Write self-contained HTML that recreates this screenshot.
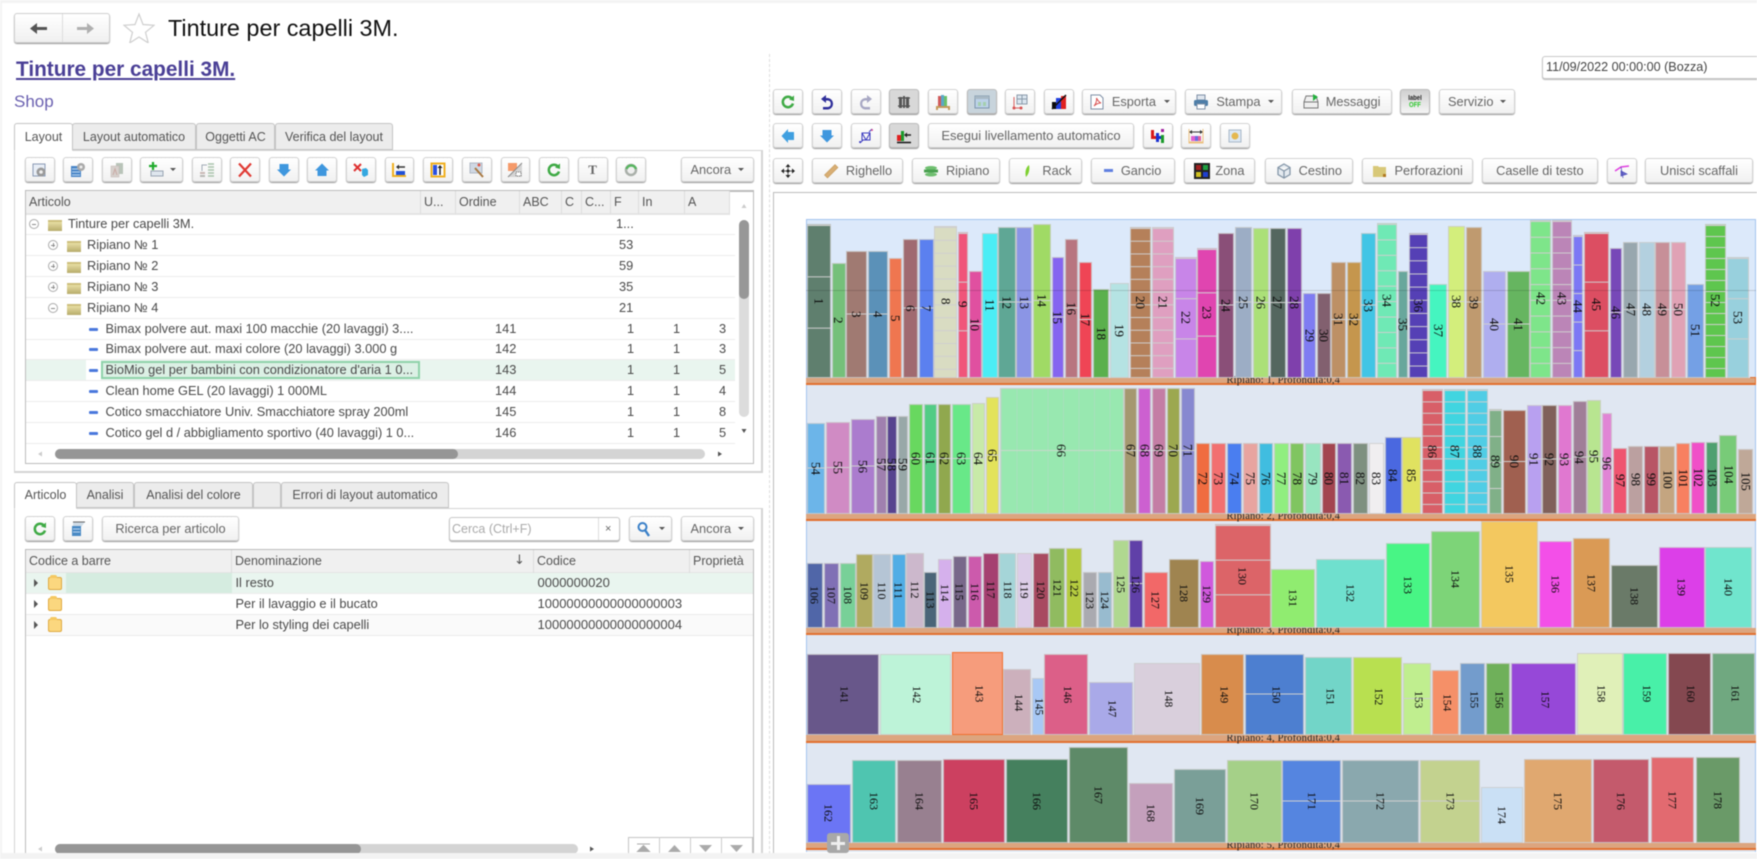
<!DOCTYPE html>
<html lang="it"><head><meta charset="utf-8"><title>Tinture per capelli 3M.</title>
<style>
html,body{margin:0;padding:0;background:#fff}
#p{position:relative;width:1757px;height:859px;overflow:hidden;background:#fff;font-family:"Liberation Sans",sans-serif;font-size:12.5px;color:#555;filter:blur(.5px)}
#p div,#p span,#p a{position:absolute;white-space:nowrap}
.btn{box-sizing:border-box;border:1px solid #d2d2d2;border-radius:3px;background:linear-gradient(#fff,#f1f1f1);box-shadow:0 1px 1px #999;display:flex;align-items:center;justify-content:center;gap:7px;color:#666;font-size:12.8px}
.btn svg{width:16px;height:16px;flex:none}
.btn.pr{background:#d8d8d8;border-color:#bbb}
.a{top:157px;height:25px}.b{top:516px;height:25px}.c{top:89px;height:25px}.d{top:123px;height:25px}.e{top:158px;height:25px}
.car{display:inline-block;width:0;height:0;border:3px solid transparent;border-top:3px solid #555;border-bottom:0;margin-left:1px}
.tab{box-sizing:border-box;background:#ececec;border:1px solid #c4c4c4;border-bottom:1px solid #c4c4c4;border-radius:3px 3px 0 0;text-align:center;color:#555;font-size:12.5px}
.tab.on{background:#fff;border-bottom-color:#fff;z-index:2}
.pan{box-sizing:border-box;border:1px solid #d4d4d4;border-width:1px 2px 2px 1px}
.grid{box-sizing:border-box;border:1px solid #bcbcbc;border-top-width:2px;background:#fff}
.hd{background:#f0f0f0;height:22px;border-bottom:2px solid #e4e4e4}
.hc{height:23px;line-height:22px;color:#555;border-right:1px solid #ddd;box-sizing:border-box;padding-left:3px;overflow:hidden;font-size:12.5px}
.ln{left:26px;height:1px;background:#ececec}
.t{line-height:20px;height:20px;color:#4a4a4a;font-size:12.8px}
.rt{text-align:right}
.dash{width:9px;height:3px;background:#4a78dc;border-radius:1px}
.tg{width:8px;height:8px;border:1px solid #aaa;border-radius:50%;box-sizing:content-box}
.tg::before{content:"";position:absolute;left:2px;right:2px;top:3.5px;height:1px;background:#888}
.tg.pl::after{content:"";position:absolute;top:2px;bottom:2px;left:3.5px;width:1px;background:#888}
.fd{width:14px;height:11px;background:linear-gradient(#e8dfa4,#b7ab6b);border-top:2px solid #cdbf7c;box-sizing:border-box}
.fd2{width:14px;height:13px;box-sizing:border-box;background:#fbd77f;border:1px solid #dfa93f;border-radius:2px}
.fd2::before{content:"";position:absolute;left:1px;top:-3px;width:7px;height:3px;background:#f5c860;border-radius:2px 2px 0 0}
.arr{width:0;height:0;border:4px solid transparent;border-left:4px solid #555;border-right:0}
.w{position:absolute;width:0;height:0;font-family:"Liberation Serif",serif;color:#0c0c0c}
.w b{position:absolute;box-sizing:border-box;left:calc(var(--x)*1px/3);top:calc(var(--t)*1px/3);width:calc((var(--r) - var(--x))*1px/3);height:calc((var(--b) - var(--t))*1px/3);background-color:var(--c);border:1px solid rgba(205,205,205,.85);display:flex;align-items:center;justify-content:center;writing-mode:vertical-rl;font-weight:400;line-height:1;overflow:visible}
.w b.m{background-image:linear-gradient(transparent calc(50% - 1px),#cfcfcf calc(50% - 1px),#cfcfcf 50%,transparent 50%)}
.w b.g{background-image:linear-gradient(#cfcfcf 1px,transparent 1px);background-size:100% calc(var(--d)*1px/3)}
.sh{left:806px;width:950px;height:7.5px;box-sizing:border-box;background:#dca57f;border-bottom:2.5px solid #e2702f}
.lb{left:1226.5px;font:10.5px/12px "Liberation Serif",serif;color:#222;letter-spacing:.15px}
</style></head><body><div id="p">
<svg width="0" height="0" style="position:absolute"><defs>
<symbol id="ref" viewBox="0 0 16 16"><path d="M12.3 5A5.2 5.2 0 1 0 13 9.500" fill="none" stroke="#3faa45" stroke-width="2.500"/><path d="M9 5.500l5-4v5.500z" fill="#3faa45"/></symbol>
<symbol id="dn" viewBox="0 0 16 16"><path d="M3.500 2h9v5.500H15l-7 7-7-7h2.500z" fill="#3f97de"/></symbol>
<symbol id="up" viewBox="0 0 16 16"><path d="M8 1.500l7 7h-2.500v5.500h-9V8.500H1z" fill="#3f97de"/></symbol>
</defs></svg>

<!-- frame strips -->
<div style="left:0;top:0;width:1757px;height:3px;background:#f3f3f3"></div>
<div style="left:0;top:0;width:2px;height:859px;background:#f3f3f3"></div>

<!-- head -->
<div style="left:14px;top:13px;width:96px;height:30px;box-sizing:border-box;border:1px solid #cfcfcf;border-radius:3px;background:linear-gradient(#fff,#f0f0f0);box-shadow:0 1px 1px #999"></div>
<div style="left:62px;top:14px;width:1px;height:28px;background:#ddd"></div>
<svg style="position:absolute;left:29px;top:22px" width="19" height="13" viewBox="0 0 19 13"><path d="M18 5v3H8v4L1 6.500 8 1v4z" fill="#555"/></svg>
<svg style="position:absolute;left:76px;top:22px" width="19" height="13" viewBox="0 0 19 13"><path d="M1 5v3h10v4l7-5.500L11 1v4z" fill="#b0b0b0"/></svg>
<svg style="position:absolute;left:123px;top:12px" width="32" height="31" viewBox="0 0 32 31"><path d="M16 2l4 10.500 11 .8-8.500 7 2.800 10.700L16 25l-9.300 6 2.800-10.700L1 13.300l11-.8z" fill="#fff" stroke="#cfcfcf" stroke-width="1.200"/></svg>
<div style="left:168px;top:14px;font-size:23.4px;line-height:28px;color:#111">Tinture per capelli 3M.</div>
<div style="left:16px;top:57px;font-size:20.800px;font-weight:700;line-height:25px;color:#4a3f96;text-decoration:underline">Tinture per capelli 3M.</div>
<div style="left:14px;top:92px;font-size:17px;line-height:20px;color:#6a60b0">Shop</div>
<div style="left:769px;top:54px;width:0;height:800px;border-left:1px dashed #dcdcdc"></div>

<!-- upper tabs -->
<div class="pan" style="left:14px;top:150px;width:749px;height:323px"></div>
<div class="tab on" style="left:14px;top:123px;width:59px;height:28px;line-height:26px">Layout</div>
<div class="tab" style="left:72px;top:123px;width:124px;height:27px;line-height:26px">Layout automatico</div>
<div class="tab" style="left:196px;top:123px;width:79px;height:27px;line-height:26px">Oggetti AC</div>
<div class="tab" style="left:275px;top:123px;width:118px;height:27px;line-height:26px">Verifica del layout</div>

<!-- upper toolbar -->
<div class="btn a" style="left:25px;width:30px"><svg viewBox="0 0 16 16"><rect x="1" y="2" width="12" height="12" fill="#e8eef6" stroke="#8a9ab5"/><circle cx="9" cy="10" r="4.500" fill="#9a9a9a"/><circle cx="9" cy="10" r="1.800" fill="#eee"/></svg></div>
<div class="btn a" style="left:63px;width:30px"><svg viewBox="0 0 16 16"><rect x="1" y="4" width="10" height="11" fill="#4a86c8"/><path d="M2 7h8M2 10h8M2 13h8" stroke="#bcd6f0"/><circle cx="11" cy="5" r="4" fill="#aaa"/><circle cx="11" cy="5" r="1.500" fill="#eee"/></svg></div>
<div class="btn a" style="left:102px;width:30px"><svg viewBox="0 0 16 16"><rect x="7" y="1" width="7" height="11" fill="#b9c4b9"/><rect x="2" y="4" width="8" height="11" fill="#d6d0cc" stroke="#c4b8b4" stroke-width=".5"/><path d="M4 13l2-6 2 6" fill="none" stroke="#c9a9a4"/></svg></div>
<div class="btn a" style="left:140px;width:43px;gap:5px"><svg viewBox="0 0 16 16"><path d="M5 0v8M1 4h8" stroke="#1faa2c" stroke-width="2.200"/><rect x="3" y="9" width="12" height="5" fill="#dfe6ee" stroke="#99a5b3"/></svg><i class="car"></i></div>
<div class="btn a" style="left:191.500px;width:30px"><svg viewBox="0 0 16 16"><path d="M9 2h6M9 5h6M9 8h6M9 11h6M9 14h6" stroke="#a9c4ac" stroke-width="1.500"/><path d="M3 9V3h5" fill="none" stroke="#a0aab5"/><rect x="1" y="10" width="5" height="2" fill="#c8b8b4"/><rect x="1" y="13" width="5" height="2" fill="#b8b8b4"/></svg></div>
<div class="btn a" style="left:230px;width:30px"><svg viewBox="0 0 16 16"><path d="M2 1.500l12 13M14 1.500l-12 13" stroke="#e03a34" stroke-width="2.200"/></svg></div>
<div class="btn a" style="left:269px;width:29.500px"><svg viewBox="0 0 16 16"><use href="#dn"/></svg></div>
<div class="btn a" style="left:307px;width:30px"><svg viewBox="0 0 16 16"><use href="#up"/></svg></div>
<div class="btn a" style="left:346px;width:30px"><svg viewBox="0 0 16 16"><path d="M1 2l7 7M8 2L1 9" stroke="#de3030" stroke-width="2"/><path d="M9 7l4-1 2 2v5l-4 2-2-2z" fill="#35a8e0"/></svg></div>
<div class="btn a" style="left:384.600px;width:29.500px"><svg viewBox="0 0 16 16"><path d="M2 1v13h13" fill="none" stroke="#f0b020" stroke-width="2"/><rect x="5" y="9" width="9" height="4" fill="#2050d8"/><path d="M6 5h8" stroke="#333" stroke-width="1.500"/><path d="M5 5l3-2.500v5z" fill="#333"/></svg></div>
<div class="btn a" style="left:423px;width:30px"><svg viewBox="0 0 16 16"><rect x="1.500" y="1.500" width="13" height="13" fill="#fff" stroke="#f0b020" stroke-width="2"/><rect x="3" y="3" width="4" height="10" fill="#2a50e0"/><path d="M10 13V5" stroke="#222" stroke-width="1.500"/><path d="M10 3l2.500 3h-5z" fill="#222"/></svg></div>
<div class="btn a" style="left:462px;width:29.500px"><svg viewBox="0 0 16 16"><rect x="1" y="1" width="12" height="10" fill="#cfd8e4" stroke="#b0b8c4"/><path d="M6 6l8 9" stroke="#a87840" stroke-width="2"/><circle cx="10" cy="3" r="1.500" fill="#e05a4a"/></svg></div>
<div class="btn a" style="left:500.500px;width:29.500px"><svg viewBox="0 0 16 16"><path d="M1 1h9v8H1z" fill="#f59a6a"/><path d="M1 15L15 1v14z" fill="#d4d4d4"/><path d="M1 15L15 1" stroke="#888"/><rect x="9" y="10" width="5" height="4" fill="#fff" stroke="#666" stroke-dasharray="1 1"/></svg></div>
<div class="btn a" style="left:539px;width:30px"><svg viewBox="0 0 16 16"><use href="#ref"/></svg></div>
<div class="btn a" style="left:577.600px;width:30px;font:700 13px 'Liberation Serif',serif;color:#666">T</div>
<div class="btn a" style="left:616px;width:30px"><svg viewBox="0 0 16 16"><circle cx="8" cy="8" r="5" fill="#eee" stroke="#aab0aa" stroke-width="2.500"/><path d="M3.500 7A5 5 0 0 1 13 7" fill="none" stroke="#57b55f" stroke-width="2.500"/></svg></div>
<div class="btn a" style="left:680.600px;width:73.400px;gap:6px">Ancora <i class="car"></i></div>

<!-- upper grid -->
<div class="grid" style="left:25px;top:190px;width:729px;height:274px"></div>
<div class="hd" style="left:26px;top:191px;width:704px"></div>
<div class="hc" style="left:26px;top:191px;width:395px">Articolo</div>
<div class="hc" style="left:421px;top:191px;width:35px">U...</div>
<div class="hc" style="left:456px;top:191px;width:64px">Ordine</div>
<div class="hc" style="left:520px;top:191px;width:42px">ABC</div>
<div class="hc" style="left:562px;top:191px;width:20px">C</div>
<div class="hc" style="left:582px;top:191px;width:29px">C...</div>
<div class="hc" style="left:611px;top:191px;width:28px">F</div>
<div class="hc" style="left:639px;top:191px;width:46px">In</div>
<div class="hc" style="left:685px;top:191px;width:45px">A</div>

<div style="left:26px;top:360px;width:709px;height:20px;background:#e9f5ef"></div>
<div style="left:86px;top:360px;width:15px;height:20px;background:#fff"></div>
<div style="left:101px;top:361px;width:319px;height:18px;box-sizing:border-box;border:2px solid #8fd2aa;background:#dcf0e5"></div>
<div class="ln" style="top:234px;width:709px"></div><div class="ln" style="top:255px;width:709px"></div><div class="ln" style="top:276px;width:709px"></div><div class="ln" style="top:297px;width:709px"></div><div class="ln" style="top:318px;width:709px"></div><div class="ln" style="top:339px;width:709px"></div><div class="ln" style="top:359px;width:709px"></div><div class="ln" style="top:380px;width:709px"></div><div class="ln" style="top:401px;width:709px"></div><div class="ln" style="top:422px;width:709px"></div><div class="ln" style="top:443px;width:709px"></div>

<span class="tg" style="left:29px;top:219px"></span><div class="fd" style="left:48px;top:220px"></div><div class="t" style="left:68px;top:214px">Tinture per capelli 3M.</div><div class="t" style="left:616px;top:214px">1...</div>
<span class="tg pl" style="left:48px;top:240px"></span><div class="fd" style="left:67px;top:241px"></div><div class="t" style="left:87px;top:235px">Ripiano № 1</div><div class="t" style="left:619px;top:235px">53</div>
<span class="tg pl" style="left:48px;top:261px"></span><div class="fd" style="left:67px;top:262px"></div><div class="t" style="left:87px;top:256px">Ripiano № 2</div><div class="t" style="left:619px;top:256px">59</div>
<span class="tg pl" style="left:48px;top:282px"></span><div class="fd" style="left:67px;top:283px"></div><div class="t" style="left:87px;top:277px">Ripiano № 3</div><div class="t" style="left:619px;top:277px">35</div>
<span class="tg" style="left:48px;top:303px"></span><div class="fd" style="left:67px;top:304px"></div><div class="t" style="left:87px;top:298px">Ripiano № 4</div><div class="t" style="left:619px;top:298px">21</div>

<div class="dash" style="left:89px;top:328px"></div><div class="t" style="left:105.500px;top:319px">Bimax polvere aut. maxi 100 macchie (20 lavaggi) 3....</div><div class="t" style="left:495px;top:319px">141</div><div class="t" style="left:627px;top:319px">1</div><div class="t" style="left:673px;top:319px">1</div><div class="t" style="left:719px;top:319px">3</div>
<div class="dash" style="left:89px;top:348px"></div><div class="t" style="left:105.500px;top:339px">Bimax polvere aut. maxi colore (20 lavaggi) 3.000 g</div><div class="t" style="left:495px;top:339px">142</div><div class="t" style="left:627px;top:339px">1</div><div class="t" style="left:673px;top:339px">1</div><div class="t" style="left:719px;top:339px">3</div>
<div class="dash" style="left:89px;top:369px"></div><div class="t" style="left:105.500px;top:360px">BioMio gel per bambini con condizionatore d'aria 1 0...</div><div class="t" style="left:495px;top:360px">143</div><div class="t" style="left:627px;top:360px">1</div><div class="t" style="left:673px;top:360px">1</div><div class="t" style="left:719px;top:360px">5</div>
<div class="dash" style="left:89px;top:390px"></div><div class="t" style="left:105.500px;top:381px">Clean home GEL (20 lavaggi) 1 000ML</div><div class="t" style="left:495px;top:381px">144</div><div class="t" style="left:627px;top:381px">1</div><div class="t" style="left:673px;top:381px">1</div><div class="t" style="left:719px;top:381px">4</div>
<div class="dash" style="left:89px;top:411px"></div><div class="t" style="left:105.500px;top:402px">Cotico smacchiatore Univ. Smacchiatore spray 200ml</div><div class="t" style="left:495px;top:402px">145</div><div class="t" style="left:627px;top:402px">1</div><div class="t" style="left:673px;top:402px">1</div><div class="t" style="left:719px;top:402px">8</div>
<div class="dash" style="left:89px;top:432px"></div><div class="t" style="left:105.500px;top:423px">Cotico gel d / abbigliamento sportivo (40 lavaggi) 1 0...</div><div class="t" style="left:495px;top:423px">146</div><div class="t" style="left:627px;top:423px">1</div><div class="t" style="left:673px;top:423px">1</div><div class="t" style="left:719px;top:423px">5</div>

<div style="left:739px;top:220px;width:10px;height:197px;background:#dcdcdc;border-radius:5px"></div>
<div style="left:739px;top:220px;width:10px;height:79px;background:#979797;border-radius:5px"></div>
<svg style="position:absolute;left:741px;top:203px" width="6" height="6"><path d="M3 1l2.500 4h-5z" fill="#ccc"/></svg>
<svg style="position:absolute;left:741px;top:428px" width="6" height="6"><path d="M3 5l2.500-4h-5z" fill="#555"/></svg>
<div style="left:55px;top:449px;width:650px;height:10px;background:#d4d4d4;border-radius:5px"></div>
<div style="left:55px;top:449px;width:403px;height:10px;background:#969696;border-radius:5px"></div>
<svg style="position:absolute;left:37px;top:451px" width="6" height="6"><path d="M1 3l4-2.500v5z" fill="#ccc"/></svg>
<svg style="position:absolute;left:717px;top:451px" width="6" height="6"><path d="M5 3L1 .5v5z" fill="#555"/></svg>

<!-- lower tabs -->
<div class="pan" style="left:14px;top:508px;width:749px;height:350px"></div>
<div class="tab on" style="left:14px;top:482px;width:63px;height:27px;line-height:25px">Articolo</div>
<div class="tab" style="left:76px;top:482px;width:58px;height:26px;line-height:25px">Analisi</div>
<div class="tab" style="left:134px;top:482px;width:119px;height:26px;line-height:25px">Analisi del colore</div>
<div class="tab" style="left:253px;top:482px;width:28px;height:26px"></div>
<div class="tab" style="left:281px;top:482px;width:168px;height:26px;line-height:25px">Errori di layout automatico</div>

<div class="btn b" style="left:25px;width:30px"><svg viewBox="0 0 16 16"><use href="#ref"/></svg></div>
<div class="btn b" style="left:63px;width:30px"><svg viewBox="0 0 16 16"><path d="M3 1h12l-4 5v9H3z" fill="#cfdbe6"/><rect x="2" y="5" width="9" height="10" fill="#4a8ac4"/><path d="M3 8h7M3 11h7" stroke="#bcd6f0"/><path d="M3 1h12" stroke="#666"/></svg></div>
<div class="btn b" style="left:102px;width:137px">Ricerca per articolo</div>
<div style="left:449px;top:517px;width:171px;height:24px;box-sizing:border-box;border:1px solid #c8c8c8;border-radius:3px;background:#fff;box-shadow:0 1px 1px #aaa"></div>
<div style="left:598px;top:518px;width:1px;height:22px;background:#ddd"></div>
<div style="left:452px;top:519px;line-height:20px;color:#aaa">Cerca (Ctrl+F)</div>
<div style="left:605px;top:519px;line-height:20px;color:#666;font-size:11px">×</div>
<div class="btn b" style="left:629px;width:43px;gap:6px"><svg viewBox="0 0 16 16"><circle cx="6.500" cy="6" r="4" fill="none" stroke="#3a80c8" stroke-width="2"/><path d="M9 9l4 6" stroke="#3a80c8" stroke-width="2.400"/></svg><i class="car"></i></div>
<div class="btn b" style="left:680.600px;width:73.400px;gap:6px">Ancora <i class="car"></i></div>

<div class="grid" style="left:25px;top:549px;width:729px;height:310px"></div>
<div class="hd" style="left:26px;top:550px;width:727px"></div>
<div class="hc" style="left:26px;top:550px;width:206px">Codice a barre</div>
<div class="hc" style="left:232px;top:550px;width:302px">Denominazione</div>
<div class="hc" style="left:534px;top:550px;width:156px">Codice</div>
<div class="hc" style="left:690px;top:550px;width:63px;border-right:0">Proprietà</div>
<div style="left:514px;top:551px;line-height:20px;font:13px/20px 'DejaVu Sans',sans-serif;color:#555">↓</div>

<div style="left:26px;top:573px;width:727px;height:20px;background:#e9f5ef"></div>
<div style="left:66px;top:573px;width:166px;height:20px;background:#d5ece0"></div>
<div style="left:26px;top:614px;width:727px;height:21px;background:#fafafa"></div>
<div class="ln" style="top:593px;width:727px"></div><div class="ln" style="top:614px;width:727px"></div><div class="ln" style="top:635px;width:727px"></div>
<div class="arr" style="left:34px;top:579px"></div><div class="fd2" style="left:48px;top:577px"></div><div class="t" style="left:235.500px;top:573px">Il resto</div><div class="t" style="left:537.500px;top:573px;font-size:13px">0000000020</div>
<div class="arr" style="left:34px;top:600px"></div><div class="fd2" style="left:48px;top:598px"></div><div class="t" style="left:235.500px;top:594px">Per il lavaggio e il bucato</div><div class="t" style="left:537.500px;top:594px;font-size:13px">10000000000000000003</div>
<div class="arr" style="left:34px;top:621px"></div><div class="fd2" style="left:48px;top:619px"></div><div class="t" style="left:235.500px;top:615px">Per lo styling dei capelli</div><div class="t" style="left:537.500px;top:615px;font-size:13px">10000000000000000004</div>

<div style="left:55px;top:844px;width:523px;height:10px;background:#d4d4d4;border-radius:5px"></div>
<div style="left:55px;top:844px;width:306px;height:10px;background:#969696;border-radius:5px"></div>
<svg style="position:absolute;left:37px;top:846px" width="6" height="6"><path d="M1 3l4-2.500v5z" fill="#ccc"/></svg>
<svg style="position:absolute;left:589px;top:846px" width="6" height="6"><path d="M5 3L1 .5v5z" fill="#555"/></svg>
<div style="left:628px;top:837px;width:125px;height:20px;box-sizing:border-box;border:1px solid #c4c4c4;background:#fff"></div>
<div style="left:659px;top:837px;width:1px;height:20px;background:#ccc"></div><div style="left:690px;top:837px;width:1px;height:20px;background:#ccc"></div><div style="left:721px;top:837px;width:1px;height:20px;background:#ccc"></div>
<svg style="position:absolute;left:636px;top:843px" width="15" height="10"><path d="M1 1h13M7.500 2.500l6 6h-12z" stroke="#aaa" fill="#aaa"/></svg>
<svg style="position:absolute;left:667px;top:845px" width="15" height="8"><path d="M7.500 0l6.500 7h-13z" fill="#aaa"/></svg>
<svg style="position:absolute;left:698px;top:845px" width="15" height="8"><path d="M1 0h13L7.500 7z" fill="#aaa"/></svg>
<svg style="position:absolute;left:729px;top:845px" width="15" height="8"><path d="M1 0h13L7.500 7z" fill="#aaa"/></svg>

<!-- right toolbar -->
<div style="left:1542px;top:56px;width:230px;height:23px;box-sizing:border-box;border:1px solid #c8c8c8;border-radius:3px;background:#fff;box-shadow:0 1px 1px #bbb"></div>
<div style="left:1546px;top:57px;line-height:20px;color:#444;font-size:12.6px">11/09/2022 00:00:00 (Bozza)</div>

<div class="btn c" style="left:773.400px;width:30px"><svg viewBox="0 0 16 16"><use href="#ref"/></svg></div>
<div class="btn c" style="left:812px;width:30px"><svg viewBox="0 0 16 16"><path d="M7 1L2 5l5 4V6.500h2a3.300 3.300 0 0 1 0 6.500H4v2.500h5a5.800 5.800 0 0 0 0-11.500H7z" fill="#2e2e9a"/></svg></div>
<div class="btn c" style="left:851px;width:30px"><svg viewBox="0 0 16 16"><path d="M9 1l5 4-5 4V6.500H7a3.300 3.300 0 0 0 0 6.500h5v2.500H7A5.800 5.800 0 0 1 7 4h2z" fill="#a8a8c4"/></svg></div>
<div class="btn c pr" style="left:889px;width:30px"><svg viewBox="0 0 16 16"><path d="M2 4h12M2 12h12" stroke="#333"/><path d="M3 3h3v11H3zM7 2h2v12H7zM10 3h3v11h-3z" fill="#555"/></svg></div>
<div class="btn c" style="left:928px;width:30px"><svg viewBox="0 0 16 16"><rect x="3" y="2" width="3" height="10" fill="#d05a5a"/><rect x="6" y="1" width="3" height="11" fill="#5aa8c8"/><rect x="9" y="2" width="3" height="10" fill="#6ac06a"/><path d="M1 12h14v2H1z" fill="#c49a5a"/><path d="M2 14v2M14 14v2" stroke="#c49a5a" stroke-width="2"/></svg></div>
<div class="btn c pr" style="left:966.600px;width:30px;background:#c8d4dc"><svg viewBox="0 0 16 16"><rect x="1" y="2" width="14" height="12" fill="#bcd2e8" stroke="#7c95ad"/><rect x="1" y="2" width="14" height="3" fill="#a8b8c4"/><rect x="4" y="8" width="3" height="4" fill="#a4cfae"/><rect x="9" y="8" width="3" height="4" fill="#a4cfae"/></svg></div>
<div class="btn c" style="left:1005px;width:30px"><svg viewBox="0 0 16 16"><rect x="5" y="1" width="10" height="9" fill="#dce6f0" stroke="#8a9aaa"/><path d="M10 1v9M5 5h10" stroke="#8a9aaa"/><path d="M2 3v11h6" stroke="#d86060" fill="none"/><circle cx="2" cy="14" r="1.500" fill="#d85050"/><circle cx="9" cy="14" r="1.500" fill="#d85050"/></svg></div>
<div class="btn c" style="left:1043.600px;width:30px"><svg viewBox="0 0 16 16"><rect x="1" y="8" width="4" height="7" fill="#0a0a0a"/><rect x="5" y="4" width="5" height="11" fill="#2040e0"/><rect x="10" y="2" width="5" height="13" fill="#e02020"/><path d="M1 15L15 1" stroke="#111" stroke-width="1.500"/></svg></div>
<div class="btn c" style="left:1082.400px;width:94px"><svg viewBox="0 0 16 16"><path d="M2 1h9l3 3v11H2z" fill="#fff" stroke="#7e8fa6"/><path d="M5 12c2-2 3-6 2.500-8 1 2 2 4 4.500 5-3 0-5 1-7 3z" fill="none" stroke="#d85050"/></svg>Esporta <i class="car"></i></div>
<div class="btn c" style="left:1185.400px;width:97px"><svg viewBox="0 0 16 16"><rect x="4" y="1" width="8" height="5" fill="#dfe6ee" stroke="#7e8fa6"/><rect x="1" y="6" width="14" height="6" rx="1.500" fill="#4e7ea8"/><rect x="4" y="10" width="8" height="5" fill="#fff" stroke="#7e8fa6"/></svg>Stampa <i class="car"></i></div>
<div class="btn c" style="left:1291.600px;width:100px"><svg viewBox="0 0 16 16"><path d="M3 2h10l2 6v6H1V8z" fill="#efefef" stroke="#777"/><path d="M1 8h14" stroke="#777"/><path d="M10 0l5 3-5 4z" fill="#22b03c"/></svg>Messaggi</div>
<div class="btn c pr" style="left:1400.300px;width:30px;background:linear-gradient(#d0d0d0,#f5f5f5)"><span style="position:static;display:block;font:700 7px/7px 'Liberation Sans',sans-serif;color:#222;text-align:center;transform:scaleX(.85)">label<br><span style="position:static;color:#2fc82f">OFF</span></span></div>
<div class="btn c" style="left:1439px;width:76.400px;gap:6px">Servizio <i class="car"></i></div>

<div class="btn d" style="left:773.400px;width:30px"><svg viewBox="0 0 16 16"><path d="M1.500 8l6.500-7v3h6v8H8v3z" fill="#3f9fe0"/></svg></div>
<div class="btn d" style="left:812px;width:30px"><svg viewBox="0 0 16 16"><use href="#dn"/></svg></div>
<div class="btn d" style="left:851px;width:30px"><svg viewBox="0 0 16 16"><path d="M4 5h8v7H4zM4 5l4 7M12 5L8 12M2 15l3-3M11 4l3-3" fill="none" stroke="#3a3ac0"/><circle cx="2" cy="14" r="1" fill="#3a3ac0"/><circle cx="14" cy="2" r="1" fill="#d04a90"/></svg></div>
<div class="btn d pr" style="left:889px;width:30px"><svg viewBox="0 0 16 16"><rect x="1" y="7" width="4" height="6" fill="#e02020"/><rect x="5" y="3" width="3" height="10" fill="#1a9a2a"/><path d="M1 14.500h14" stroke="#111" stroke-width="1.500"/><path d="M9 7h6" stroke="#222" stroke-width="1.500"/><path d="M8 7l3-2.500v5z" fill="#222"/></svg></div>
<div class="btn d" style="left:928px;width:206px;font-size:13px">Esegui livellamento automatico</div>
<div class="btn d" style="left:1142.800px;width:30px"><svg viewBox="0 0 16 16"><rect x="1" y="2" width="3" height="9" fill="#d81818"/><rect x="4" y="8" width="5" height="3" fill="#d81818"/><rect x="6" y="5" width="3" height="9" fill="#1a30d0"/><rect x="9" y="8" width="3" height="3" fill="#1a30d0"/><rect x="11" y="7" width="3" height="8" fill="#1a9a2a"/><rect x="11" y="1" width="3" height="3" fill="#a020a0"/></svg></div>
<div class="btn d" style="left:1181px;width:30px"><svg viewBox="0 0 16 16"><path d="M2 4h12" stroke="#333"/><path d="M1 4l3-2v4zM15 4l-3-2v4z" fill="#333"/><rect x="3" y="8" width="4" height="5" fill="#e060d0"/><rect x="7" y="8" width="3" height="5" fill="#6a6ae0"/><rect x="10" y="8" width="3" height="5" fill="#e060a0"/><path d="M1 1v14h14V1M1 14h14" fill="none" stroke="#ecc080"/></svg></div>
<div class="btn d" style="left:1219.700px;width:30px"><svg viewBox="0 0 16 16"><rect x="2" y="2" width="12" height="12" fill="#dce8f4" stroke="#a8b8c8"/><circle cx="8" cy="8" r="3.500" fill="#e4b850"/></svg></div>

<div class="btn e" style="left:773.400px;width:30px"><svg viewBox="0 0 16 16"><path d="M8 1l2.500 3h-5zM8 15l2.500-3h-5zM1 8l3-2.500v5zM15 8l-3-2.500v5z" fill="#222"/><circle cx="8" cy="8" r="1.500" fill="#222"/><path d="M8 3v10M3 8h10" stroke="#222" stroke-width=".7"/></svg></div>
<div class="btn e" style="left:812px;width:91px"><svg viewBox="0 0 16 16"><path d="M1.500 12L12 1.500l3 3L4.500 15z" fill="#d8ae74" stroke="#c49a5c" stroke-width=".6"/></svg>Righello</div>
<div class="btn e" style="left:912px;width:88.300px"><svg viewBox="0 0 16 16"><ellipse cx="8" cy="5" rx="6" ry="2" fill="#6fbf70"/><path d="M1 8h14" stroke="#4aa050" stroke-width="3"/><ellipse cx="8" cy="11.500" rx="6" ry="2" fill="#6fbf70"/></svg>Ripiano</div>
<div class="btn e" style="left:1009.300px;width:72.400px"><svg viewBox="0 0 16 16"><path d="M10 2c1 4 0 9-3 12-1-3-1-9 3-12z" fill="#7ed030"/></svg>Rack</div>
<div class="btn e" style="left:1090.600px;width:84px;gap:8px"><span style="position:static;display:block;width:9px;height:3px;background:#6080e0"></span>Gancio</div>
<div class="btn e" style="left:1183.500px;width:71.800px;gap:5px"><svg viewBox="0 0 16 16"><rect width="16" height="16" fill="#222"/><rect x="2" y="2" width="5" height="5" fill="#a02020"/><rect x="9" y="2" width="5" height="5" fill="#20a040"/><rect x="2" y="9" width="5" height="5" fill="#d0c020"/><rect x="9" y="9" width="5" height="5" fill="#2040d0"/></svg>Zona</div>
<div class="btn e" style="left:1265px;width:87.600px"><svg viewBox="0 0 16 16"><path d="M8 1l6 3.500v7L8 15l-6-3.500v-7zM2 4.500L8 8l6-3.500M8 8v7" fill="#e4eaf0" stroke="#8496a8" stroke-width="1.300"/></svg>Cestino</div>
<div class="btn e" style="left:1361.500px;width:111.300px"><svg viewBox="0 0 16 16"><path d="M1 3h5l1 1h7v10H1z" fill="#d8c878"/><path d="M11 11h3v3h-3z" fill="#b07820"/></svg>Perforazioni</div>
<div class="btn e" style="left:1481.700px;width:116.300px">Caselle di testo</div>
<div class="btn e" style="left:1607px;width:30px"><svg viewBox="0 0 16 16"><path d="M1 8l6-4 8-1" fill="none" stroke="#e040e0" stroke-width="1.500"/><path d="M7 4l2 11M7 8l6 3-6 2z" fill="#6a6ac8" stroke="#4a4ab8" stroke-width=".7"/></svg></div>
<div class="btn e" style="left:1645px;width:108px">Unisci scaffali</div>

<!-- planogram canvas -->
<div style="left:772.700px;top:192px;width:1000px;height:670px;box-sizing:border-box;border:1px solid #bdbdbd;background:#fff"></div>
<div style="left:806px;top:219px;width:950px;height:159px;background:#dce9fa"></div>
<div style="left:806px;top:385px;width:950px;height:467px;background:#e0e7f2"></div>
<div style="left:806px;top:219px;width:950px;height:633px;box-sizing:border-box;border:1px solid #a3c4ef;border-width:1px 1.500px 0 1.500px"></div>

<div class="sh" style="top:377.700px"></div><div class="sh" style="top:513.700px"></div><div class="sh" style="top:627.700px"></div><div class="sh" style="top:735.300px"></div><div class="sh" style="top:842.700px"></div>
<div style="left:1750px;top:377px;width:6px;height:8px;box-sizing:border-box;border:1.500px solid #e2702f;border-left:0"></div>
<div class="lb" style="top:375px">Ripiano: 1, Profondità:0,4</div>
<div class="lb" style="top:511px">Ripiano: 2, Profondità:0,4</div>
<div class="lb" style="top:625px">Ripiano: 3, Profondità:0,4</div>
<div class="lb" style="top:732.500px">Ripiano: 4, Profondità:0,4</div>
<div class="lb" style="top:840px">Ripiano: 5, Profondità:0,4</div>

<!-- row 1 left -->
<div class="w" style="left:790px;top:210px;--b:503;font-size:13px">
<b class="g" style="--x:50;--r:124;--t:42;--c:#5f7f6e;--d:154">1</b>
<b style="--x:125;--r:167;--t:160;--c:#75c07a">2</b>
<b class="m" style="--x:168;--r:231;--t:122;--c:#a07a72">3</b>
<b class="m" style="--x:233;--r:295;--t:122;--c:#5b91b8">4</b>
<b style="--x:297;--r:335;--t:145;--c:#ef7650">5</b>
<b class="m" style="--x:339;--r:384;--t:88;--c:#a06a70">6</b>
<b class="m" style="--x:387;--r:432;--t:88;--c:#5b80ef">7</b>
<b class="g" style="--x:433;--r:502;--t:47;--c:#d9dcc2;--d:38.700">8</b>
<b class="g" style="--x:503;--r:534;--t:65;--c:#f0557a;--d:146">9</b>
<b class="m" style="--x:536;--r:575;--t:183;--c:#e050a0">10</b>
<b style="--x:577;--r:624;--t:68;--c:#4bedf5">11</b>
<b class="m" style="--x:625;--r:677;--t:50;--c:#5fa795">12</b>
<b class="m" style="--x:679;--r:727;--t:50;--c:#8b95e5">13</b>
<b class="m" style="--x:729;--r:783;--t:42;--c:#a0da65">14</b>
<b class="m" style="--x:785;--r:821;--t:141;--c:#8565f0">15</b>
<b class="m" style="--x:824;--r:864;--t:88;--c:#b87580">16</b>
<b class="m" style="--x:867;--r:907;--t:155;--c:#ef4555">17</b>
<b style="--x:910;--r:958;--t:238;--c:#5bb04d">18</b>
<b style="--x:960;--r:1016;--t:220;--c:#b5e3e3">19</b>
<b class="g" style="--x:1019;--r:1084;--t:50;--c:#b5805a;--d:38.200">20</b>
<b class="g" style="--x:1085;--r:1153;--t:50;--c:#df9fc0;--d:38.200">21</b>
<b class="g" style="--x:1156;--r:1220;--t:141;--c:#c885e8;--d:120.700">22</b>
<b class="g" style="--x:1222;--r:1280;--t:113;--c:#e045b0;--d:130">23</b>
<b class="m" style="--x:1284;--r:1333;--t:68;--c:#8a4f78">24</b>
<b class="m" style="--x:1335;--r:1386;--t:50;--c:#9cadc5">25</b>
<b class="m" style="--x:1388;--r:1437;--t:55;--c:#abe078">26</b>
<b class="m" style="--x:1439;--r:1487;--t:55;--c:#54675f">27</b>
</div>
<!-- row 1 right -->
<div class="w" style="left:1270px;top:210px;--b:503;font-size:13px">
<b class="m" style="--x:50;--r:97;--t:55;--c:#7f40ac">28</b>
<b style="--x:100;--r:139;--t:248;--c:#7f7cf2">29</b>
<b style="--x:142;--r:182;--t:248;--c:#82606f">30</b>
<b class="m" style="--x:184;--r:228;--t:155;--c:#bd9065">31</b>
<b class="m" style="--x:231;--r:272;--t:155;--c:#c5964d">32</b>
<b class="m" style="--x:273;--r:318;--t:68;--c:#41c5e5">33</b>
<b class="g" style="--x:320;--r:382;--t:40;--c:#6fe9b5;--d:46.300">34</b>
<b style="--x:384;--r:413;--t:183;--c:#68a79c">35</b>
<b class="g" style="--x:416;--r:475;--t:68;--c:#5540b5;--d:39.500">36</b>
<b style="--x:478;--r:532;--t:222;--c:#45f5c0">37</b>
<b class="m" style="--x:534;--r:585;--t:48;--c:#d3ee7c">38</b>
<b class="m" style="--x:588;--r:637;--t:50;--c:#bf9a6f">39</b>
<b class="m" style="--x:640;--r:708;--t:183;--c:#afaeef">40</b>
<b class="m" style="--x:711;--r:779;--t:183;--c:#66b560">41</b>
<b class="g" style="--x:781;--r:844;--t:30;--c:#7ee58a;--d:47.300">42</b>
<b class="g" style="--x:846;--r:907;--t:30;--c:#bb85b7;--d:47.300">43</b>
<b class="g" style="--x:909;--r:940;--t:75;--c:#7c78f5;--d:85.600">44</b>
<b class="g" style="--x:943;--r:1016;--t:65;--c:#dc4e62;--d:146">45</b>
<b class="m" style="--x:1019;--r:1057;--t:115;--c:#7748b8">46</b>
<b class="m" style="--x:1060;--r:1105;--t:97;--c:#98a7ae">47</b>
<b class="m" style="--x:1107;--r:1154;--t:97;--c:#b3d0df">48</b>
<b class="m" style="--x:1156;--r:1200;--t:97;--c:#c78f98">49</b>
<b class="m" style="--x:1202;--r:1248;--t:97;--c:#e0a2b5">50</b>
<b style="--x:1250;--r:1302;--t:222;--c:#74a0e5">51</b>
<b class="g" style="--x:1304;--r:1368;--t:42;--c:#5ec64e;--d:33">52</b>
<b class="g" style="--x:1370;--r:1437;--t:141;--c:#98d0dd;--d:120.700">53</b>
</div>
<div style="left:806px;top:290px;width:950px;height:1px;background:rgba(0,0,0,.14)"></div>

<!-- row 2 left -->
<div class="w" style="left:790px;top:210px;--b:911;font-size:13px">
<b class="m" style="--x:50;--r:105;--t:638;--c:#6cb5e9">54</b>
<b class="m" style="--x:107;--r:180;--t:635;--c:#d08bc4">55</b>
<b class="m" style="--x:182;--r:256;--t:628;--c:#ab7cce">56</b>
<b class="m" style="--x:258;--r:290;--t:618;--c:#a080af">57</b>
<b class="m" style="--x:292;--r:321;--t:618;--c:#57438f">58</b>
<b class="m" style="--x:323;--r:355;--t:618;--c:#98a8a8">59</b>
<b class="m" style="--x:357;--r:399;--t:582;--c:#68d85f">60</b>
<b class="m" style="--x:402;--r:441;--t:582;--c:#52cc85">61</b>
<b class="m" style="--x:443;--r:483;--t:582;--c:#90a84e">62</b>
<b class="m" style="--x:485;--r:544;--t:582;--c:#68e888">63</b>
<b class="m" style="--x:546;--r:586;--t:580;--c:#c8eaa8">64</b>
<b class="m" style="--x:587;--r:627;--t:562;--c:#e3e35a">65</b>
<b style="--x:629;--r:1001;--t:533;--c:#98e8b0;background-image:linear-gradient(transparent calc(50% - 1px),#c8d8cc calc(50% - 1px),#c8d8cc 50%,transparent 50%),linear-gradient(90deg,#a8e0bc 1px,transparent 1px);background-size:100% 100%,15.500px 100%">66</b>
<b class="m" style="--x:1003;--r:1042;--t:533;--c:#a59870">67</b>
<b class="m" style="--x:1045;--r:1084;--t:533;--c:#cc60d0">68</b>
<b class="m" style="--x:1087;--r:1128;--t:533;--c:#c47da5">69</b>
<b class="m" style="--x:1131;--r:1170;--t:533;--c:#9ca850">70</b>
<b class="m" style="--x:1173;--r:1214;--t:533;--c:#8788d0">71</b>
<b style="--x:1217;--r:1260;--t:700;--c:#f06c40">72</b>
<b style="--x:1263;--r:1308;--t:700;--c:#f27070">73</b>
<b style="--x:1311;--r:1356;--t:700;--c:#4a7ef0">74</b>
<b style="--x:1358;--r:1404;--t:700;--c:#e8a4a0">75</b>
<b style="--x:1406;--r:1450;--t:700;--c:#40bde0">76</b>
</div>
<!-- row 2 right -->
<div class="w" style="left:1270px;top:210px;--b:911;font-size:13px">
<b style="--x:12;--r:58;--t:700;--c:#90ee80">77</b>
<b style="--x:61;--r:103;--t:700;--c:#80c560">78</b>
<b style="--x:105;--r:153;--t:700;--c:#98e5c0">79</b>
<b style="--x:155;--r:199;--t:700;--c:#a34550">80</b>
<b style="--x:202;--r:246;--t:700;--c:#8a5ab0">81</b>
<b style="--x:249;--r:294;--t:700;--c:#7e9080">82</b>
<b style="--x:297;--r:342;--t:698;--c:#f0eef0">83</b>
<b style="--x:344;--r:395;--t:680;--c:#4a68e0">84</b>
<b style="--x:397;--r:453;--t:680;--c:#e0e260">85</b>
<b class="g" style="--x:455;--r:519;--t:538;--c:#d85f68;--d:34.200">86</b>
<b class="g" style="--x:521;--r:588;--t:538;--c:#40d5e0;--d:34.200">87</b>
<b class="g" style="--x:590;--r:655;--t:538;--c:#50cde5;--d:34.200">88</b>
<b class="g" style="--x:657;--r:695;--t:598;--c:#80b088;--d:78">89</b>
<b class="m" style="--x:698;--r:768;--t:600;--c:#a06050">90</b>
<b class="m" style="--x:770;--r:815;--t:585;--c:#b8a0f0">91</b>
<b class="m" style="--x:817;--r:861;--t:585;--c:#80605a">92</b>
<b class="m" style="--x:863;--r:905;--t:585;--c:#e078d0">93</b>
<b class="m" style="--x:908;--r:950;--t:573;--c:#a07f98">94</b>
<b class="m" style="--x:952;--r:993;--t:570;--c:#b8e590">95</b>
<b class="m" style="--x:995;--r:1027;--t:608;--c:#e085d5">96</b>
<b style="--x:1030;--r:1072;--t:714;--c:#ef5570">97</b>
<b style="--x:1075;--r:1120;--t:708;--c:#bba0a0">98</b>
<b style="--x:1123;--r:1166;--t:708;--c:#b85565">99</b>
<b style="--x:1168;--r:1215;--t:708;--c:#c4a580;font-size:12.500px">100</b>
<b style="--x:1217;--r:1260;--t:698;--c:#f88060;font-size:12.500px">101</b>
<b style="--x:1262;--r:1305;--t:695;--c:#f050c8;font-size:12.500px">102</b>
<b style="--x:1307;--r:1345;--t:695;--c:#4fa070;font-size:12.500px">103</b>
<b style="--x:1348;--r:1401;--t:676;--c:#78cb78;font-size:12.500px">104</b>
<b style="--x:1403;--r:1450;--t:716;--c:#bfa898;font-size:12.500px">105</b>
</div>

<!-- row 3 -->
<div class="w" style="left:790px;top:510px;--b:353;font-size:12px">
<b style="--x:50;--r:98;--t:160;--c:#5066a8">106</b>
<b style="--x:101;--r:147;--t:160;--c:#8070b5">107</b>
<b style="--x:150;--r:197;--t:160;--c:#78d098">108</b>
<b style="--x:199;--r:248;--t:132;--c:#b0aa60">109</b>
<b style="--x:250;--r:303;--t:132;--c:#b5c5d5">110</b>
<b style="--x:305;--r:347;--t:132;--c:#50ade5">111</b>
<b style="--x:349;--r:401;--t:128;--c:#ccb8cc">112</b>
<b style="--x:403;--r:441;--t:185;--c:#4a6578">113</b>
<b style="--x:443;--r:486;--t:146;--c:#d5b0ec">114</b>
<b style="--x:488;--r:530;--t:138;--c:#78688a">115</b>
<b style="--x:534;--r:577;--t:138;--c:#cc5aac">116</b>
<b style="--x:580;--r:626;--t:128;--c:#a54070">117</b>
<b style="--x:628;--r:679;--t:128;--c:#a5d5d8">118</b>
<b style="--x:681;--r:727;--t:128;--c:#dccde8">119</b>
<b style="--x:729;--r:776;--t:128;--c:#a84a60">120</b>
<b style="--x:778;--r:826;--t:114;--c:#90bb60">121</b>
<b style="--x:829;--r:877;--t:114;--c:#b5cc40">122</b>
<b style="--x:879;--r:922;--t:185;--c:#aaaab0">123</b>
<b style="--x:924;--r:967;--t:185;--c:#98bbcf">124</b>
<b style="--x:969;--r:1016;--t:90;--c:#b0d890">125</b>
<b class="m" style="--x:1018;--r:1058;--t:90;--c:#6040a8">126</b>
<b style="--x:1061;--r:1133;--t:185;--c:#f26868">127</b>
<b style="--x:1136;--r:1228;--t:148;--c:#9f8450">128</b>
<b style="--x:1231;--r:1271;--t:152;--c:#d058dd">129</b>
<b class="g" style="--x:1274;--r:1442;--t:42;--c:#dc6468;--d:104">130</b>
</div>
<div class="w" style="left:1270px;top:510px;--b:353;font-size:12px">
<b style="--x:4;--r:135;--t:176;--c:#90ec70">131</b>
<b style="--x:137;--r:345;--t:147;--c:#6fe0ce">132</b>
<b style="--x:347;--r:480;--t:98;--c:#48f585">133</b>
<b style="--x:483;--r:631;--t:62;--c:#7dd478">134</b>
<b style="--x:633;--r:805;--t:33;--c:#f3c85f">135</b>
<b style="--x:807;--r:906;--t:93;--c:#f34fe8">136</b>
<b style="--x:909;--r:1021;--t:85;--c:#da9a55">137</b>
<b style="--x:1024;--r:1164;--t:166;--c:#6a7a68">138</b>
<b style="--x:1166;--r:1304;--t:110;--c:#dc3fe8">139</b>
<b style="--x:1306;--r:1445;--t:110;--c:#70e5cd">140</b>
</div>

<!-- row 4 -->
<div class="w" style="left:790px;top:510px;--b:676;font-size:11.500px">
<b style="--x:50;--r:267;--t:432;--c:#68578a">141</b>
<b style="--x:269;--r:484;--t:432;--c:#bdf3d8">142</b>
<b style="--x:486;--r:640;--t:425;--c:#f69c7c;border:1.500px solid #f07030">143</b>
<b style="--x:640;--r:724;--t:478;--c:#ccb0bc">144</b>
<b style="--x:726;--r:761;--t:503;--c:#a8c8f5">145</b>
<b style="--x:763;--r:893;--t:432;--c:#dc5f88">146</b>
<b style="--x:896;--r:1030;--t:517;--c:#a9a9e8">147</b>
<b style="--x:1032;--r:1230;--t:458;--c:#d9cfdc">148</b>
<b style="--x:1233;--r:1362;--t:432;--c:#d88c4c">149</b>
<b class="m" style="--x:1366;--r:1543;--t:432;--c:#4d7fd0">150</b>
</div>
<div class="w" style="left:1270px;top:510px;--b:676;font-size:11.500px">
<b style="--x:106;--r:245;--t:442;--c:#72d5c8">151</b>
<b style="--x:248;--r:397;--t:442;--c:#b8e050">152</b>
<b class="m" style="--x:399;--r:484;--t:460;--c:#c0ee8f">153</b>
<b style="--x:486;--r:568;--t:480;--c:#f59068">154</b>
<b style="--x:571;--r:644;--t:460;--c:#739ccc">155</b>
<b style="--x:647;--r:719;--t:460;--c:#6fb05a">156</b>
<b style="--x:723;--r:918;--t:460;--c:#9648d8">157</b>
<b style="--x:921;--r:1058;--t:428;--c:#e0f0b8">158</b>
<b style="--x:1060;--r:1190;--t:428;--c:#48f0a8">159</b>
<b style="--x:1193;--r:1323;--t:428;--c:#844850">160</b>
<b style="--x:1326;--r:1455;--t:428;--c:#70a880">161</b>
</div>

<!-- row 5 -->
<div class="w" style="left:790px;top:510px;--b:998;font-size:12px">
<b style="--x:50;--r:182;--t:822;--c:#6b75f5">162</b>
<b style="--x:185;--r:319;--t:750;--c:#4fc5b0">163</b>
<b style="--x:322;--r:455;--t:750;--c:#988090">164</b>
<b style="--x:458;--r:645;--t:746;--c:#cc4060">165</b>
<b style="--x:648;--r:833;--t:746;--c:#45805e">166</b>
<b style="--x:838;--r:1014;--t:710;--c:#5e8a68">167</b>
<b style="--x:1017;--r:1148;--t:818;--c:#c4a0bc">168</b>
<b style="--x:1151;--r:1309;--t:778;--c:#7a9f98">169</b>
<b style="--x:1312;--r:1475;--t:750;--c:#a5d088">170</b>
</div>
<div class="w" style="left:1270px;top:510px;--b:998;font-size:12px">
<b class="m" style="--x:37;--r:214;--t:750;--c:#5585e0">171</b>
<b class="m" style="--x:217;--r:447;--t:750;--c:#8aa8ae">172</b>
<b class="m" style="--x:451;--r:631;--t:750;--c:#c3d28f">173</b>
<b style="--x:633;--r:758;--t:830;--c:#cae0f5">174</b>
<b style="--x:761;--r:967;--t:746;--c:#e0a870">175</b>
<b style="--x:970;--r:1137;--t:746;--c:#c45a6c">176</b>
<b style="--x:1142;--r:1273;--t:740;--c:#e26a70">177</b>
<b style="--x:1278;--r:1410;--t:740;--c:#6a9a68">178</b>
</div>

<div style="left:827px;top:833px;width:22px;height:20px;background:#a8a8a8;border-radius:3px"></div>
<div style="left:836.500px;top:836px;width:3px;height:14px;background:#eee"></div>
<div style="left:831px;top:841.500px;width:14px;height:3px;background:#eee"></div>

<div style="left:0;top:853px;width:1757px;height:6px;background:#f3f3f3"></div>
</div></body></html>
